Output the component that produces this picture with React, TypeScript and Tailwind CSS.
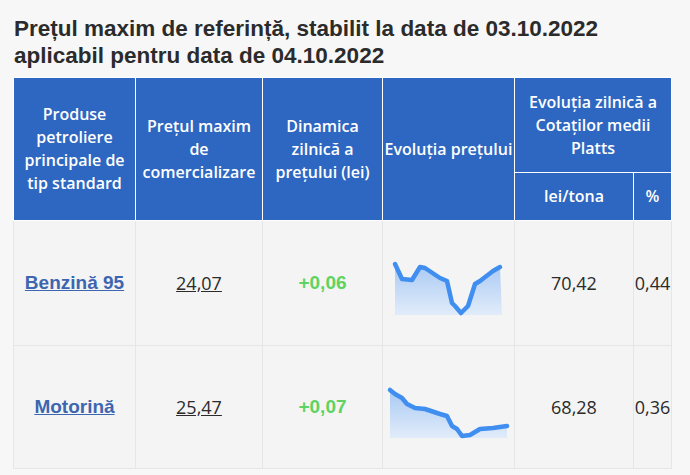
const headCell = 'border border-white bg-[#2e67c1] text-center align-middle text-[16px] font-semibold leading-[23px] text-white'
const bodyCell = 'border border-[#e6e6e6] bg-[#f4f4f4] text-center align-middle'

const rows = [
  {
    name: 'Benzină 95',
    price: '24,07',
    delta: '+0,06',
    lei: '70,42',
    pct: '0,44',
    width: 107,
    height: 52,
    points: [
      [0, 1], [7, 16], [17, 17], [25, 4], [30, 5], [45, 15], [52, 18], [57, 40],
      [60, 43], [66, 50], [73, 43], [80, 21], [85, 18], [98, 8], [105, 4],
    ],
  },
  {
    name: 'Motorină',
    price: '25,47',
    delta: '+0,07',
    lei: '68,28',
    pct: '0,36',
    width: 117,
    height: 50,
    points: [
      [0, 2], [5, 6], [12, 10], [17, 16], [25, 20], [35, 21], [50, 26], [57, 28],
      [62, 38], [67, 41], [72, 48], [80, 47], [90, 41], [103, 40], [117, 38],
    ],
  },
]

function Sparkline ({ width, height, points, id }: {
  width: number
  height: number
  points: number[][]
  id: string
}) {
  const line = points.map(([x, y]) => `${x},${y}`).join(' ')
  const area = `0,${height} ${line} ${width},${height}`

  return (
    <svg width={width} height={height} viewBox={`0 0 ${width} ${height}`} className="mx-auto mt-[12px] block overflow-visible">
      <defs>
        <linearGradient id={id} x1="0" y1="0" x2="0" y2="1">
          <stop offset="0%" stopColor="#a9c9f3" />
          <stop offset="100%" stopColor="#e1ecfa" />
        </linearGradient>
      </defs>
      <polygon points={area} fill={`url(#${id})`} />
      <polyline points={line} fill="none" stroke="#3f8ef0" strokeWidth="4.5" strokeLinejoin="round" strokeLinecap="round" />
    </svg>
  )
}

export default function App () {
  return (
    <div className="min-h-[475px] w-[690px] bg-[#f7f7f7] pt-[15px]">
      <h1 className="pl-[14px] font-['Liberation_Sans',Arial,sans-serif] text-[22.5px] font-bold leading-[27px] text-[#2b2b2b]">
        Prețul maxim de referință, stabilit la data de 03.10.2022
        <br />
        aplicabil pentru data de 04.10.2022
      </h1>

      <table className="ml-[13px] mt-[8px] w-[658px] table-fixed border-collapse font-['Open_Sans',sans-serif]">
        <colgroup>
          <col className="w-[122px]" />
          <col className="w-[127px]" />
          <col className="w-[120px]" />
          <col className="w-[132px]" />
          <col className="w-[119px]" />
          <col className="w-[38px]" />
        </colgroup>
        <thead>
          <tr className="h-[95px]">
            <th rowSpan={2} className={headCell}>Produse petroliere principale de tip standard</th>
            <th rowSpan={2} className={headCell}>Prețul maxim de comercializare</th>
            <th rowSpan={2} className={headCell}>Dinamica zilnică a prețului (lei)</th>
            <th rowSpan={2} className={`${headCell} whitespace-nowrap`}>Evoluția prețului</th>
            <th colSpan={2} className={headCell}>Evoluția zilnică a Cotaților medii Platts</th>
          </tr>
          <tr className="h-[48px]">
            <th className={headCell}>lei/tona</th>
            <th className={headCell}>%</th>
          </tr>
        </thead>
        <tbody>
          {rows.map((row, index) => (
            <tr key={row.name} className={index === 0 ? 'h-[125px]' : 'h-[123px]'}>
              <td className={bodyCell}>
                <a href="#" className="font-['Liberation_Sans',Arial,sans-serif] text-[19px] font-bold text-[#3d66b0] underline">
                  {row.name}
                </a>
              </td>
              <td className={bodyCell}>
                <span className="text-[18px] text-[#2b2b2b] underline">{row.price}</span>
              </td>
              <td className={bodyCell}>
                <span className="font-['Liberation_Sans',Arial,sans-serif] text-[19px] font-bold text-[#5fd35f]">{row.delta}</span>
              </td>
              <td className={bodyCell}>
                <Sparkline width={row.width} height={row.height} points={row.points} id={`spark-${index}`} />
              </td>
              <td className={`${bodyCell} text-[18px] text-[#2b2b2b]`}>{row.lei}</td>
              <td className={`${bodyCell} overflow-visible whitespace-nowrap text-[18px] text-[#2b2b2b]`}>{row.pct}</td>
            </tr>
          ))}
        </tbody>
      </table>
    </div>
  )
}
